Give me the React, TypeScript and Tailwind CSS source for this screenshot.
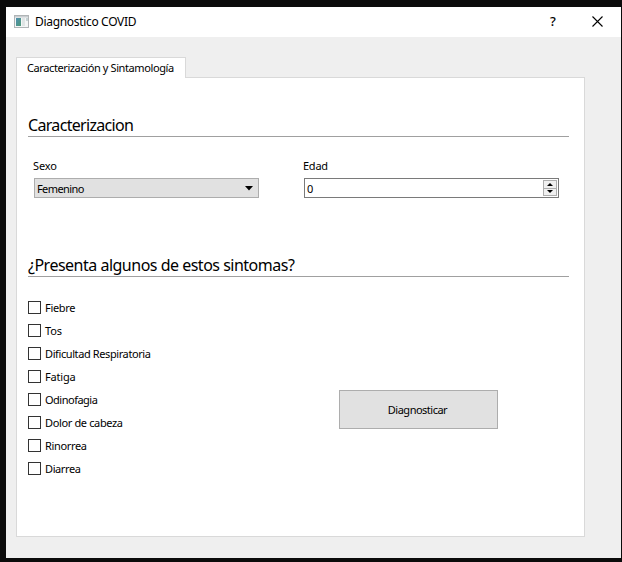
import React from 'react';

const symptoms = [
  { label: 'Fiebre', tracking: 'tracking-[-0.3px]' },
  { label: 'Tos', tracking: 'tracking-[-0.1px]' },
  { label: 'Dificultad Respiratoria', tracking: 'tracking-[-0.4px]' },
  { label: 'Fatiga', tracking: 'tracking-[-0.2px]' },
  { label: 'Odinofagia', tracking: 'tracking-[-0.5px]' },
  { label: 'Dolor de cabeza', tracking: 'tracking-[-0.36px]' },
  { label: 'Rinorrea', tracking: 'tracking-[-0.35px]' },
  { label: 'Diarrea', tracking: 'tracking-[-0.4px]' },
];

function AppIcon() {
  return (
    <svg className="block" width="15" height="13" viewBox="0 0 15 13">
      <defs>
        <linearGradient id="pane" x1="0" y1="0" x2="1" y2="1">
          <stop offset="0" stopColor="#4f8fb0" />
          <stop offset="1" stopColor="#4f9a78" />
        </linearGradient>
      </defs>
      <rect x="0.5" y="0.5" width="14" height="12" fill="#f4f6f6" stroke="#b0b4b6" />
      <rect x="1" y="1" width="13" height="1.5" fill="#c9ced1" />
      <rect x="2" y="3" width="5" height="8" fill="url(#pane)" />
      <rect x="8" y="3" width="3" height="8" fill="#dfe5e5" />
      <rect x="12" y="3" width="2" height="3" fill="#c5d2d4" />
    </svg>
  );
}

function TitleBar() {
  return (
    <header className="flex h-[30px] shrink-0 items-center bg-white pl-2">
      <div className="-mt-0.5">
        <AppIcon />
      </div>
      <h1 className="ml-1.5 flex-1 text-[12px] leading-4 tracking-[-0.32px]">Diagnostico COVID</h1>
      <button aria-label="Ayuda" className="flex h-full w-[45px] items-center justify-center pb-0.5 pl-px">
        <span className="text-[13px] font-medium leading-4">?</span>
      </button>
      <button aria-label="Cerrar" className="flex h-full w-[46px] items-center justify-center pb-px pr-px">
        <svg width="11" height="11" viewBox="0 0 11 11" stroke="#000" strokeWidth="1.1">
          <path d="M.5.5l10 10M10.5.5l-10 10" />
        </svg>
      </button>
    </header>
  );
}

export default function App() {
  return (
    <div className="h-[562px] w-[622px] overflow-hidden bg-[#0b0b0b] pt-[7px] pr-px pl-1.5 font-['Noto_Sans',sans-serif] text-[11px] leading-4 text-black">
      <div className="flex h-[551px] flex-col bg-[#efefef]">
        <TitleBar />
        <div className="flex flex-1 flex-col pt-5 pl-2.5">
          <div className="z-10 -mb-px flex h-[21px] w-[170px] items-center border border-b-0 border-[#d9d9d9] bg-white pl-2.5">
            <span className="whitespace-nowrap tracking-[-0.4px]">Caracterización y Sintamología</span>
          </div>
          <main className="h-[460px] w-[569px] border border-[#d9d9d9] bg-white pl-[11px] pr-[15px]">
            <h2 className="mt-[34px] flex h-[25px] items-center border-b border-[#a0a0a0] pt-0.5 text-[16px] tracking-[-0.68px]">
              Caracterizacion
            </h2>
            <div className="mt-[21px] flex gap-[44px] pl-[5px]">
              <div className="w-[226px]">
                <label className="block h-5 tracking-[-0.1px]">Sexo</label>
                <div className="ml-px flex h-5 w-[225px] items-center justify-between border border-[#adadad] bg-[#e1e1e1] pl-0.5 pr-[5px]">
                  <span className="pt-0.5 tracking-[-0.6px]">Femenino</span>
                  <svg width="8" height="5" viewBox="0 0 8 5"><path d="M0 0h8L4 4.5z" /></svg>
                </div>
              </div>
              <div className="w-[256px]">
                <label className="block h-5 tracking-[-0.25px]">Edad</label>
                <div className="ml-px flex h-5 items-center justify-between border border-[#7a7a7a] bg-white pl-0.5 pr-px">
                  <span className="pt-0.5">0</span>
                  <div className="flex h-4 w-3.5 flex-col border border-[#adadad] bg-[#f0f0f0]">
                    <div className="flex flex-1 items-center justify-center border-b border-[#adadad]">
                      <svg width="6" height="3" viewBox="0 0 6 3"><path d="M0 3h6L3 0z" /></svg>
                    </div>
                    <div className="flex flex-1 items-center justify-center">
                      <svg width="6" height="3" viewBox="0 0 6 3"><path d="M0 0h6L3 3z" /></svg>
                    </div>
                  </div>
                </div>
              </div>
            </div>
            <h2 className="mt-[54px] flex h-[25px] items-center border-b border-[#a0a0a0] pt-0.5 text-[16px] tracking-[-0.5px]">
              ¿Presenta algunos de estos sintomas?
            </h2>
            <div className="mt-[19px] flex">
              <ul className="w-[311px]">
                {symptoms.map(({ label, tracking }) => (
                  <li key={label} className="flex h-[23px] items-center">
                    <span className="h-[13px] w-[13px] border border-[#333]" />
                    <span className={`ml-1 ${tracking}`}>{label}</span>
                  </li>
                ))}
              </ul>
              <button className="mt-[94px] h-[39px] w-[159px] border border-[#adadad] bg-[#e1e1e1] pr-0.5 tracking-[-0.5px]">
                Diagnosticar
              </button>
            </div>
          </main>
        </div>
      </div>
    </div>
  );
}
